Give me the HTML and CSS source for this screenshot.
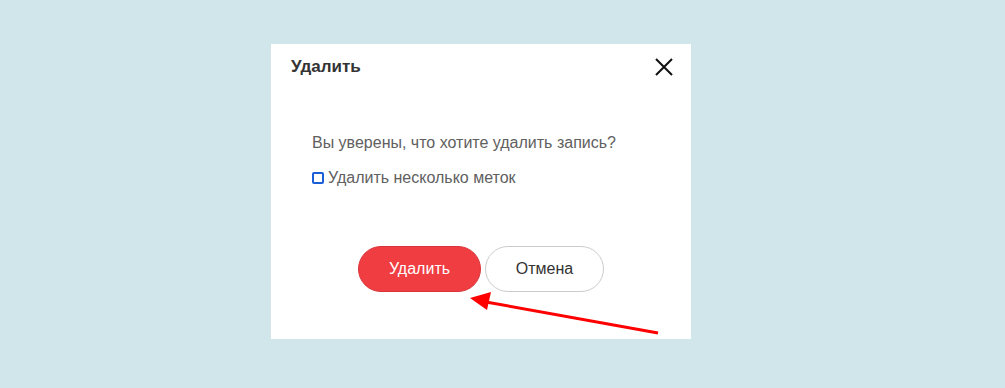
FILE: index.html
```html
<!DOCTYPE html>
<html lang="ru">

<head>
  <meta charset="UTF-8">
  <meta name="viewport" content="width=device-width, initial-scale=1.0">
  <title>Удалить</title>
  <link rel="stylesheet" href="styles.css">
</head>

<body>

  <div class="modal">
    <!-- Header -->
    <div class="modal-header">
      <h2>Удалить</h2>
      <button class="close-btn" aria-label="Закрыть">
        <svg width="18" height="18" viewBox="0 0 18 18">
          <path d="M1 1 L17 17 M17 1 L1 17" stroke="#111" stroke-width="2" fill="none" />
        </svg>
      </button>
    </div>

    <!-- Body -->
    <div class="modal-body">
      <p class="question">Вы уверены, что хотите удалить запись?</p>
      <label class="check-row">
        <span class="checkbox"></span>
        Удалить несколько меток
      </label>
    </div>

    <!-- Footer -->
    <div class="modal-footer">
      <button class="btn btn-danger">Удалить</button>
      <button class="btn btn-cancel">Отмена</button>
    </div>
  </div>

  <!-- Pointer arrow -->
  <svg class="arrow" width="1005" height="388" viewBox="0 0 1005 388">
    <line x1="658" y1="333" x2="486" y2="302" stroke="#ff0000" stroke-width="3" />
    <polygon points="470,298 491,292 487,310" fill="#ff0000" />
  </svg>

</body>

</html>
```

FILE: styles.css
```css
/* Global Styles */
body {
  font-family: "Liberation Sans", Arial, sans-serif;
  background-color: #d0e6eb;
  margin: 0;
  padding: 44px 0 0 271px;
  height: 388px;
  box-sizing: border-box;
  overflow: hidden;
}

.modal {
  background-color: #fff;
  width: 420px;
  height: 295px;
  display: flex;
  flex-direction: column;
}

.modal-header {
  display: flex;
  justify-content: space-between;
  align-items: center;
  height: 46px;
  padding: 0 18px 0 20px;
}

.modal-header h2 {
  margin: 0;
  font-size: 17px;
  font-weight: bold;
  color: #333;
}

.close-btn {
  background: none;
  border: none;
  padding: 0;
  width: 18px;
  height: 18px;
  cursor: pointer;
}

.modal-body {
  padding: 43px 0 0 41px;
  color: #606060;
  font-size: 16px;
}

.question {
  margin: 0;
  line-height: 20px;
}

.check-row {
  display: flex;
  align-items: center;
  margin-top: 15px;
  line-height: 20px;
}

.checkbox {
  width: 8px;
  height: 8px;
  border: 2px solid #1a5fd6;
  border-radius: 2px;
  margin: 0 4px 0 0;
}

.modal-footer {
  display: flex;
  justify-content: center;
  gap: 4px;
  margin-top: 58px;
}

.btn {
  font-family: inherit;
  font-size: 16px;
  height: 46px;
  border-radius: 23px;
  cursor: pointer;
}

.btn-danger {
  width: 123px;
  background-color: #ef3d42;
  border: 1px solid #d9353a;
  color: #fff;
}

.btn-cancel {
  width: 119px;
  background-color: #fff;
  border: 1px solid #ccc;
  color: #333;
}

.arrow {
  position: absolute;
  left: 0;
  top: 0;
  pointer-events: none;
}
```
